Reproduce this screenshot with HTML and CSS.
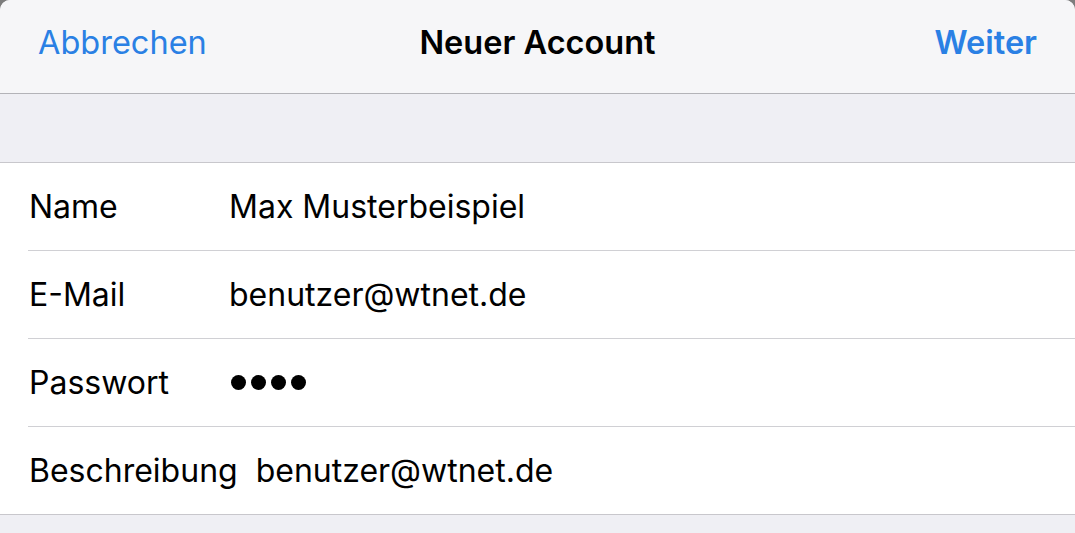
FILE: index.html
```html
<!DOCTYPE html>
<html lang="de">
<head>
<meta charset="utf-8">
<title>Neuer Account</title>
<link rel="stylesheet" href="styles.css">
</head>
<body>
<div class="sheet">
  <header class="nav">
    <span class="nav-btn">Abbrechen</span>
    <span class="nav-title">Neuer Account</span>
    <span class="nav-btn nav-btn-strong">Weiter</span>
  </header>
  <div class="band"></div>
  <section class="group">
    <div class="row"><span class="label">Name</span><span class="value">Max Musterbeispiel</span></div>
    <div class="row"><span class="label">E-Mail</span><span class="value">benutzer@wtnet.de</span></div>
    <div class="row"><span class="label">Passwort</span><span class="value dots"><i></i><i></i><i></i><i></i></span></div>
    <div class="row row-last"><span class="label">Beschreibung</span><span class="value">benutzer@wtnet.de</span></div>
  </section>
</div>
</body>
</html>
```
FILE: styles.css
```css
html, body {
  margin: 0;
  padding: 0;
  background: #7d7d7d;
}
body {
  font-family: Inter, "Noto Sans", "Liberation Sans", sans-serif;
  color: #000;
}
.sheet {
  height: 533px;
  background: #efeff4;
  border-radius: 10px 10px 0 0;
  overflow: hidden;
}
.nav {
  height: 93px;
  background: #f6f6f8;
  border-bottom: 1px solid #b3b3b8;
  display: flex;
  align-items: center;
  justify-content: space-between;
  padding: 0 38px 0 38px;
  position: relative;
}
.nav-btn {
  color: #2a80e4;
  font-size: 32.5px;
  padding-bottom: 8px;
}
.nav-btn-strong {
  font-weight: 600;
}
.nav-title {
  font-size: 32.5px;
  font-weight: 600;
  padding-bottom: 8px;
  position: absolute;
  left: 0;
  right: 0;
  text-align: center;
  pointer-events: none;
}
.band {
  height: 68px;
  border-bottom: 1px solid #c8c7cc;
}
.group {
  background: #fff;
  border-bottom: 1px solid #c8c7cc;
}
.row {
  height: 87px;
  margin-left: 28px;
  padding-left: 1px;
  display: flex;
  align-items: center;
  gap: 18px;
  font-size: 32px;
  border-bottom: 1px solid #d0d0d4;
}
.row-last {
  border-bottom: none;
}
.label {
  min-width: 182px;
}
.dots {
  display: flex;
  gap: 5px;
  padding-left: 2px;
}
.dots i {
  display: block;
  width: 15px;
  height: 15px;
  border-radius: 50%;
  background: #000;
}
```
